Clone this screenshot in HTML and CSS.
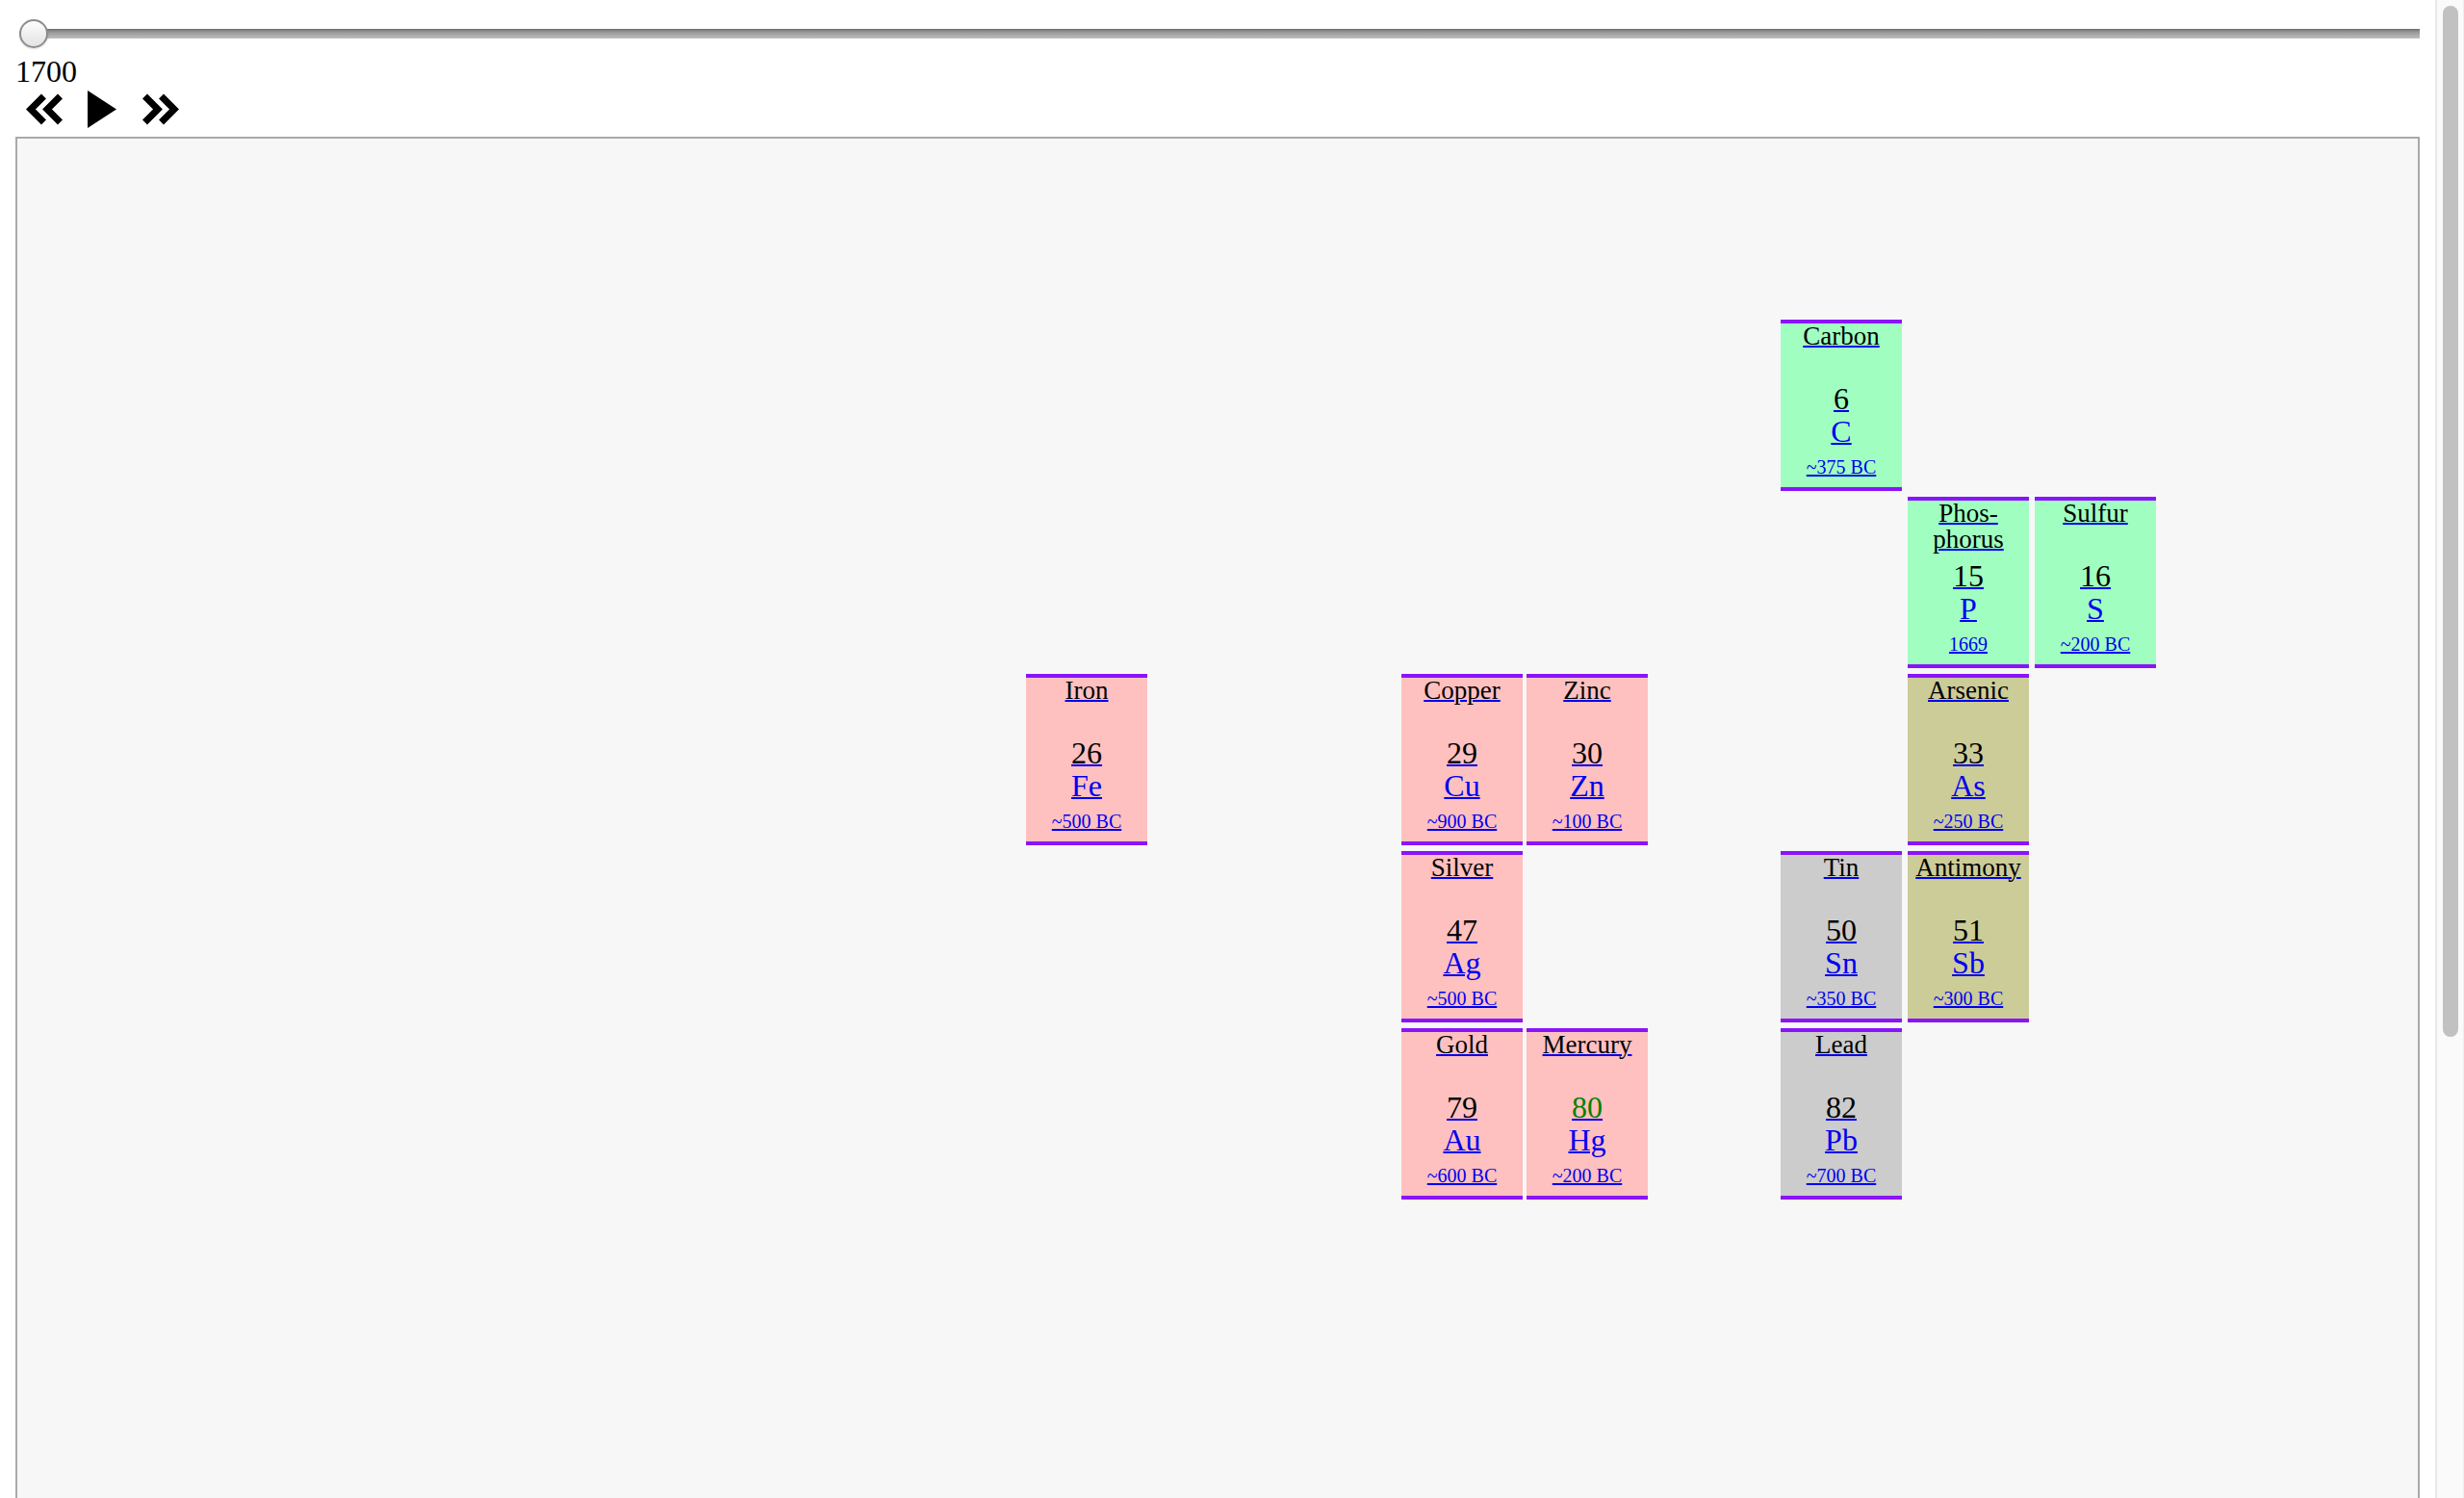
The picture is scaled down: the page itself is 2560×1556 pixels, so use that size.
FILE: index.html
```html
<!DOCTYPE html>
<html lang="en">
<head>
<meta charset="utf-8">
<title>Element discovery timeline</title>
<link rel="stylesheet" href="styles.css">
</head>
<body>
<input class="year-slider" type="range" min="1700" max="2020" value="1700" aria-label="Year">
<div class="year">1700</div>
<div class="controls">
  <svg class="ctl ctl-back" width="38" height="33" viewBox="0 0 38 33" aria-label="Back"><polyline points="18.45,3 4.95,16.5 18.45,30"/><polyline points="35.5,3 22,16.5 35.5,30"/></svg>
  <svg class="ctl ctl-play" width="30" height="39" viewBox="0 0 30 39" aria-label="Play"><polygon points="0,0 30,19.5 0,39"/></svg>
  <svg class="ctl ctl-fwd" width="38" height="33" viewBox="0 0 38 33" aria-label="Forward"><polyline points="19.55,3 33.05,16.5 19.55,30"/><polyline points="2.5,3 16,16.5 2.5,30"/></svg>
</div>
<div class="table">
  <a class="tile nonmetal" href="#" style="grid-column:14;grid-row:2"><span class="name">Carbon</span><span class="num">6</span><span class="sym">C</span><span class="date">~375 BC</span></a>
  <a class="tile nonmetal" href="#" style="grid-column:15;grid-row:3"><span class="name">Phos-<br>phorus</span><span class="num">15</span><span class="sym">P</span><span class="date">1669</span></a>
  <a class="tile nonmetal" href="#" style="grid-column:16;grid-row:3"><span class="name">Sulfur</span><span class="num">16</span><span class="sym">S</span><span class="date">~200 BC</span></a>
  <a class="tile transition" href="#" style="grid-column:8;grid-row:4"><span class="name">Iron</span><span class="num">26</span><span class="sym">Fe</span><span class="date">~500 BC</span></a>
  <a class="tile transition" href="#" style="grid-column:11;grid-row:4"><span class="name">Copper</span><span class="num">29</span><span class="sym">Cu</span><span class="date">~900 BC</span></a>
  <a class="tile transition" href="#" style="grid-column:12;grid-row:4"><span class="name">Zinc</span><span class="num">30</span><span class="sym">Zn</span><span class="date">~100 BC</span></a>
  <a class="tile metalloid" href="#" style="grid-column:15;grid-row:4"><span class="name">Arsenic</span><span class="num">33</span><span class="sym">As</span><span class="date">~250 BC</span></a>
  <a class="tile transition" href="#" style="grid-column:11;grid-row:5"><span class="name">Silver</span><span class="num">47</span><span class="sym">Ag</span><span class="date">~500 BC</span></a>
  <a class="tile post" href="#" style="grid-column:14;grid-row:5"><span class="name">Tin</span><span class="num">50</span><span class="sym">Sn</span><span class="date">~350 BC</span></a>
  <a class="tile metalloid" href="#" style="grid-column:15;grid-row:5"><span class="name">Antimony</span><span class="num">51</span><span class="sym">Sb</span><span class="date">~300 BC</span></a>
  <a class="tile transition" href="#" style="grid-column:11;grid-row:6"><span class="name">Gold</span><span class="num">79</span><span class="sym">Au</span><span class="date">~600 BC</span></a>
  <a class="tile transition" href="#" style="grid-column:12;grid-row:6"><span class="name">Mercury</span><span class="num liquid">80</span><span class="sym">Hg</span><span class="date">~200 BC</span></a>
  <a class="tile post" href="#" style="grid-column:14;grid-row:6"><span class="name">Lead</span><span class="num">82</span><span class="sym">Pb</span><span class="date">~700 BC</span></a>
</div>
<div class="scrollbar" aria-hidden="true"><div class="scrollbar-thumb"></div></div>
</body>
</html>
```
FILE: styles.css
```css
html {
  background: #ffffff;
}

body {
  margin: 16px 46px 16px 16px;
  font-family: "Liberation Serif", "Times New Roman", serif;
  color: #000;
}

.year-slider {
  -webkit-appearance: none;
  appearance: none;
  display: block;
  box-sizing: border-box;
  width: 2498px;
  height: 30px;
  margin: 4px 0 4px 4px;
  padding: 0;
  background: transparent;
}
.year-slider::-webkit-slider-runnable-track {
  height: 10px;
  border-radius: 5px;
  background: linear-gradient(#6c6c6c 0%, #959595 30%, #ababab 65%, #bebebe 100%);
}
.year-slider::-webkit-slider-thumb {
  -webkit-appearance: none;
  appearance: none;
  box-sizing: border-box;
  width: 30px;
  height: 30px;
  margin-top: -10px;
  border-radius: 50%;
  border: 2px solid #8c8c8c;
  background: linear-gradient(#fdfdfd, #e3e3e3);
  box-shadow: 0 1px 2px rgba(0, 0, 0, 0.15);
}

.year {
  font-size: 32px;
  line-height: 37px;
  padding-top: 2px;
}

.controls {
  display: flex;
  align-items: center;
  height: 41px;
}
.ctl {
  display: block;
  flex: none;
}
.ctl polyline {
  fill: none;
  stroke: #000;
  stroke-width: 7;
  stroke-linejoin: miter;
  stroke-linecap: butt;
}
.ctl polygon {
  fill: #000;
}
.ctl-back {
  margin-left: 11px;
}
.ctl-play {
  margin-left: 26px;
}
.ctl-fwd {
  margin-left: 27px;
}

.table {
  box-sizing: border-box;
  margin-top: 8px;
  height: 2082px;
  border: 2px solid #a9a9a9;
  background: #f7f7f7;
  padding: 4px 0 0 138px;
  display: grid;
  grid-template-columns: repeat(11, 130px) repeat(7, 132px);
  grid-template-rows: repeat(7, 178px);
  column-gap: 0;
  row-gap: 6px;
  align-content: start;
}

.tile {
  box-sizing: border-box;
  display: flex;
  flex-direction: column;
  align-items: stretch;
  width: 126px;
  height: 178px;
  border-top: 4px solid #8a14fa;
  border-bottom: 4px solid #8a14fa;
  text-align: center;
  color: #0000ee;
  text-decoration: underline;
  text-decoration-thickness: 2px;
}
.transition { background: #ffc0c0; }
.nonmetal { background: #a0ffc0; }
.metalloid { background: #cccc99; }
.post { background: #cccccc; }

.name {
  display: block;
  height: 61px;
  font-size: 27px;
  line-height: 26.7px;
  color: #000;
}
.num {
  display: block;
  font-size: 32px;
  line-height: 34px;
  color: #000;
}
.num.liquid {
  color: #008000;
}
.sym {
  display: block;
  font-size: 32px;
  line-height: 34px;
}
.date {
  display: block;
  font-size: 20px;
  line-height: 41px;
}

/* static rendering of the page's vertical scrollbar */
.scrollbar {
  position: fixed;
  top: 0;
  right: 0;
  bottom: 0;
  width: 30px;
  box-sizing: border-box;
  background: #fafafa;
  border-left: 2px solid #e8e8e8;
  border-right: 1px solid #efefef;
  padding: 6px 5px 0 6px;
}
.scrollbar-thumb {
  height: 1071px;
  border-radius: 8px;
  background: #c1c1c1;
}
```
